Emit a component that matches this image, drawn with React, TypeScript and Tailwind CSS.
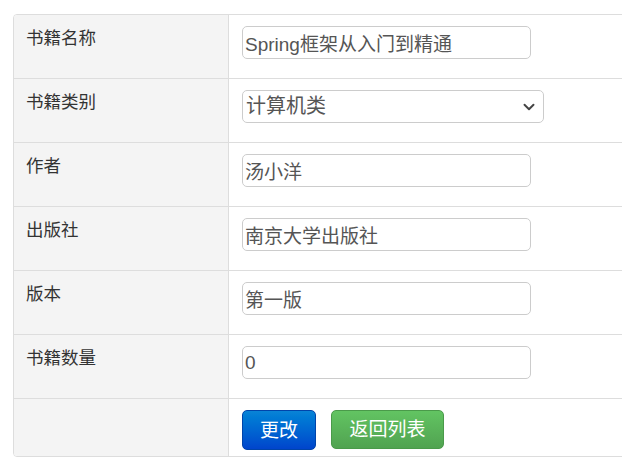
import { ChevronDown } from "lucide-react";

const rows = [
  { label: "书籍名称", value: "Spring框架从入门到精通", type: "input" },
  { label: "书籍类别", value: "计算机类", type: "select" },
  { label: "作者", value: "汤小洋", type: "input" },
  { label: "出版社", value: "南京大学出版社", type: "input" },
  { label: "版本", value: "第一版", type: "input" },
  { label: "书籍数量", value: "0", type: "input" },
];

const font = { fontFamily: '"Liberation Sans", "Noto Sans CJK SC", sans-serif' };

export default function App() {
  return (
    <div className="w-[622px] h-[471px] overflow-hidden bg-white pt-[14px] pl-[13px]" style={font}>
      <div className="w-[640px] border border-[#dddddd] rounded-[4px] overflow-hidden text-[17.5px] leading-[25px] text-[#333]">
        {rows.map((r) => (
          <div key={r.label} className="grid grid-cols-[215px_1fr] h-[64px] border-b border-[#dddddd]">
            <div className="bg-[#f4f4f4] border-r border-[#dddddd] pl-[12px] pt-[11px]">{r.label}</div>
            <div className="pl-[13px] pt-[11px]">
              {r.type === "select" ? (
                <div className="w-[302px] h-[33px] border border-[#cccccc] rounded-[5px] flex items-center justify-between pl-[3px] pr-[5px] text-[20px] text-[#555]">
                  <span>{r.value}</span>
                  <ChevronDown size={18} strokeWidth={2.6} className="text-[#444]" />
                </div>
              ) : (
                <input
                  readOnly
                  value={r.value}
                  className="w-[289px] h-[33px] border border-[#cccccc] rounded-[5px] px-[2px] text-[19px] text-[#555] outline-none"
                  style={font}
                />
              )}
            </div>
          </div>
        ))}
        <div className="grid grid-cols-[215px_1fr] h-[57px]">
          <div className="bg-[#f4f4f4] border-r border-[#dddddd]" />
          <div className="pl-[13px] pt-[11px] flex gap-[15px] items-start">
            <button className="w-[74px] h-[40px] rounded-[5px] bg-gradient-to-b from-[#0a84d6] to-[#0044cc] border border-[#0044aa] text-white text-[19px]">
              更改
            </button>
            <button className="w-[113px] h-[39px] rounded-[5px] bg-gradient-to-b from-[#62c462] to-[#51a351] border border-[#4a9a4a] text-white text-[19px]">
              返回列表
            </button>
          </div>
        </div>
      </div>
    </div>
  );
}
